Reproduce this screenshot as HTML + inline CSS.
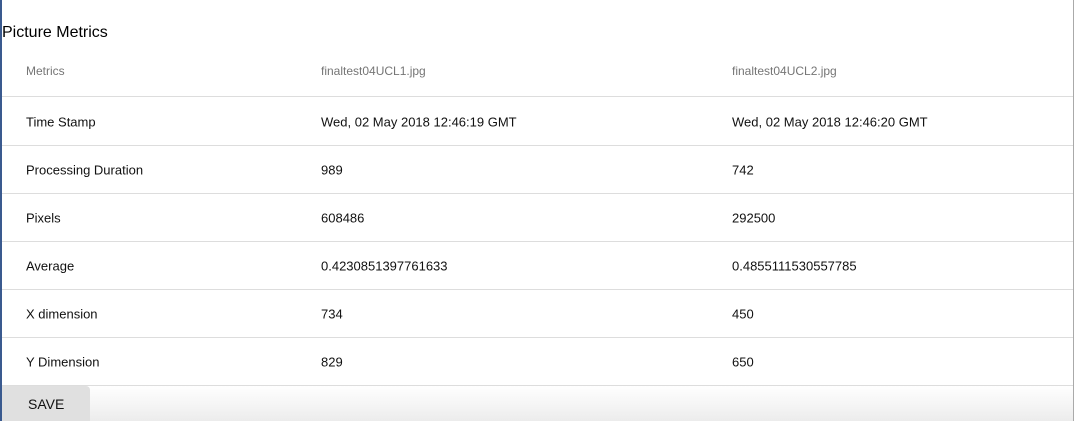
<!DOCTYPE html>
<html><head><style>
body{margin:0;width:1075px;height:421px;overflow:hidden;background:#fff;font-family:"Liberation Sans",Arial,sans-serif;position:relative}
.lb{position:absolute;left:0;top:0;width:2px;height:421px;background:#3a5a8f}
.rb{position:absolute;left:1073px;top:0;width:1px;height:421px;background:#aaa}
h1{position:absolute;left:2px;top:24px;margin:0;font-size:16px;font-weight:normal;color:#000}
.row{position:absolute;left:2px;width:1071px;height:48px;border-bottom:1px solid #ddd;font-size:13px;color:#111}
.row span{position:absolute;top:50%;transform:translateY(-50%);white-space:nowrap}
.hd{font-size:12px;color:#757575}
.c1{left:24px}.c2{left:319px}.c3{left:730px}
.foot{position:absolute;left:2px;top:386px;width:1071px;height:35px;background:linear-gradient(#fff,#ececec)}
.btn{position:absolute;left:0;top:0;width:88px;height:35px;background:#e0e0e0;border-top-right-radius:4px;font-size:14px;color:#111}
.btn span{position:absolute;left:26px;top:10px}
</style></head><body>
<div class="lb"></div><div class="rb"></div>
<h1>Picture Metrics</h1>
<div class="row hd" style="top:45px;height:51px"><span class="c1">Metrics</span><span class="c2">finaltest04UCL1.jpg</span><span class="c3">finaltest04UCL2.jpg</span></div>
<div class="row" style="top:98px;height:47px"><span class="c1">Time Stamp</span><span class="c2">Wed, 02 May 2018 12:46:19 GMT</span><span class="c3">Wed, 02 May 2018 12:46:20 GMT</span></div>
<div class="row" style="top:146px;height:47px"><span class="c1">Processing Duration</span><span class="c2">989</span><span class="c3">742</span></div>
<div class="row" style="top:194px;height:47px"><span class="c1">Pixels</span><span class="c2">608486</span><span class="c3">292500</span></div>
<div class="row" style="top:242px;height:47px"><span class="c1">Average</span><span class="c2">0.4230851397761633</span><span class="c3">0.4855111530557785</span></div>
<div class="row" style="top:290px;height:47px"><span class="c1">X dimension</span><span class="c2">734</span><span class="c3">450</span></div>
<div class="row" style="top:338px;height:47px"><span class="c1">Y Dimension</span><span class="c2">829</span><span class="c3">650</span></div>
<div class="foot"><div class="btn"><span>SAVE</span></div></div>
</body></html>
